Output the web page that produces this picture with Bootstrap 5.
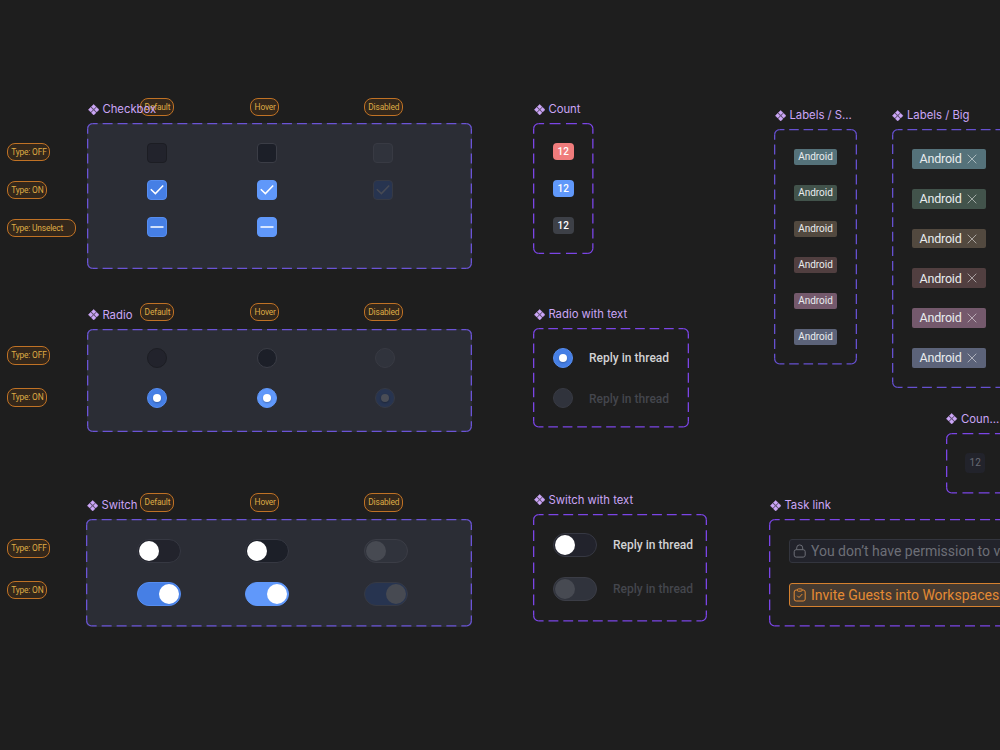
<!DOCTYPE html>
<html lang="en">
<head>
<meta charset="utf-8">
<meta name="viewport" content="width=device-width, initial-scale=1">
<title>Controls</title>
<link href="https://cdn.jsdelivr.net/npm/bootstrap@5.3.0/dist/css/bootstrap.min.css" rel="stylesheet">
<style>
  body { background: #1e1e1e; font-family: Roboto, "Liberation Sans", sans-serif; }
  .board { width: 1000px; height: 750px; }

  /* component sets pinned on the canvas */
  .set { position: absolute; display: flex; flex-direction: column; z-index: 2; }
  .set-name { font: 400 11.3px/15px Inter, sans-serif; letter-spacing: .01px; color: #cba6f7; height: 22px; gap: 3.4px; padding: 1px 0 0 .6px; margin: 0; white-space: nowrap; }
  .set-name svg { width: 11.4px; height: 11.4px; margin-top: 1.6px; flex: none; }
  .frame { position: relative; color: #7b45e6; }
  .frame > .dashes { position: absolute; inset: 0; width: 100%; height: 100%; overflow: visible; pointer-events: none; }
  .stack { display: flex; flex-direction: column; gap: 20px; }
  .filled { background: #2b2d35; border-radius: 5px; color: #6b54d6; }
  .indigo { color: #6650d0; }

  #checkbox { left: 87px; top: 101px; } #checkbox .frame { width: 385px; height: 146px; padding: 20px 0 0 60px; }
  #radio { left: 87px; top: 306.5px; } #radio .frame { width: 385px; height: 103px; padding: 19px 0 0 60px; }
  #switch { left: 86px; top: 497px; } #switch .frame { width: 386px; height: 107.5px; padding: 20px 0 0 51px; }
  #count { left: 533px; top: 101px; } #count .frame { width: 60.5px; height: 131px; padding: 20px; }
  #radio-text { left: 533px; top: 306px; } #radio-text .frame { width: 156px; height: 99.5px; padding: 19.5px 20px; }
  #switch-text { left: 533px; top: 491.5px; } #switch-text .frame { width: 174px; height: 107.5px; padding: 19.5px 20px; }
  #labels-s { left: 774px; top: 107px; } #labels-s .frame { width: 83px; height: 235.5px; padding: 20px; }
  #labels-b { left: 891.6px; top: 107px; } #labels-b .frame { width: 114px; height: 259px; padding: 20px; }
  #count-b { left: 945.6px; top: 410.5px; } #count-b .frame { width: 60px; height: 60.5px; padding: 20px 19.4px; }
  #task { left: 769px; top: 497px; } #task .frame { width: 372px; height: 107.5px; padding: 20px; }

  .states { display: grid; justify-content: start; align-content: start; }
  .s-check { grid-template-columns: 110px 115.6px 20px; row-gap: 17px; }
  .s-radio { grid-template-columns: 110px 117.6px 20px; row-gap: 20px; }
  .s-switch { grid-template-columns: 108px 118.7px 44px; row-gap: 19px; }

  .box, .dot { width: 20px; height: 20px; border: 1px solid #1c1d23; background: #22232c; display: flex; align-items: center; justify-content: center; flex: none; }
  .box { border-radius: 4px; }
  .box svg { width: 18px; height: 18px; fill: none; stroke: #fff; stroke-width: 1.5; flex: none; }
  .dot { border-radius: 50%; }
  .dot i { width: 8px; height: 8px; border-radius: 50%; background: #fff; box-shadow: 0 1px 2px #0004; }
  .hov { background: #1c1f28; border-color: #3b3d46; }
  .off { background: #30333c; border-color: #383a43; }
  .on { background: #467fe5; border-color: #568df0; }
  .on.hov { background: #6098fa; border-color: #6098fa; }
  .on.off { background: #273450; border-color: #363943; }
  .on.off svg { stroke: #474a54; }
  .on.off i { background: #4a4d56; }

  .sw { width: 44px; height: 24px; padding: 1px; border-radius: 12px; border: 1px solid #363842; background: #22232c; display: flex; align-items: center; flex: none; }
  .sw i { width: 20px; height: 20px; border-radius: 50%; background: #fff; }
  .sw.hov { background: #1c1f28; border-color: #363842; }
  .sw.off { background: #30333c; border-color: #3b3d46; }
  .sw.off i { background: #474a52; }
  .sw.on { background: #467fe5; border-color: #568df0; justify-content: flex-end; }
  .sw.on.hov { background: #6098fa; border-color: #6098fa; }
  .sw.on.off { background: #273450; border-color: #363943; }

  .num { width: 20.5px; height: 17px; border-radius: 4px; font-size: 10px; font-weight: 500; line-height: 17px; letter-spacing: .1px; color: #fff; text-align: center; }
  .n-red { background: #f07c7c; } .n-blue { background: #6098fa; } .n-grey { background: #3d4047; }
  .n-dim { background: #22232b; color: #686a73; height: 20.5px; line-height: 20.5px; font-weight: 400; }

  .reply { font-size: 12px; font-weight: 500; line-height: 20px; letter-spacing: .02px; color: #d2d2d4; white-space: nowrap; padding-top: .6px; }
  .reply.dim { color: #44464d; }

  .tag { border-radius: 2px; color: #e9ecee; white-space: nowrap; display: flex; align-items: center; }
  .tag-s { width: 43px; height: 16px; font-size: 10px; justify-content: center; letter-spacing: -.01px; }
  .tag-b { width: 74px; height: 20px; font-size: 12.5px; padding: 1px 0 0 8px; gap: 5.5px; letter-spacing: -.22px; }
  .tag-b svg { width: 10px; height: 10px; margin-top: -1px; stroke: #fff; opacity: .5; stroke-width: 1; flex: none; }
  .t1 { background: #55727a; } .t2 { background: #42534b; } .t3 { background: #52493f; }
  .t4 { background: #513f40; } .t5 { background: #74596c; } .t6 { background: #5c6379; }

  .task-link { width: 332px; height: 24px; border: 1px solid #33353e; border-radius: 3px; background: #22232b; color: #6d6f77; font-size: 14px; line-height: 22px; padding-left: 3.4px; gap: 3.6px; white-space: nowrap; overflow: hidden; }
  .task-link.live { background: #453a30; border-color: #d5812f; color: #e48a34; }
  .task-link span { padding-top: 1px; }
  .task-link svg { width: 14px; height: 14px; fill: none; stroke: currentColor; flex: none; }

  /* free annotations round the sets */
  .note { position: absolute; height: 18.4px; border: 1.3px solid #c07225; border-radius: 8px; background: #33271b; color: #dfab45; font-size: 8.4px; letter-spacing: -.17px; line-height: 17px; padding-left: 3.6px; white-space: nowrap; z-index: 1; }
  .c1 { left: 140px; width: 34.4px; } .c2 { left: 250px; width: 29px; } .c3 { left: 363.7px; width: 39.3px; }
  .w-off { left: 6.6px; width: 43.8px; } .w-on { left: 6.6px; width: 40.6px; } .w-un { left: 6.6px; width: 69.8px; }
  .y98 { top: 98px; } .y303 { top: 302.7px; } .y493 { top: 493.2px; }
  .y143 { top: 142.9px; } .y181 { top: 180.8px; } .y219 { top: 218.8px; }
  .y346 { top: 346.4px; } .y388 { top: 388.2px; } .y539 { top: 539.2px; } .y581 { top: 581px; }
</style>
</head>
<body class="overflow-hidden">
<svg class="d-none">
  <symbol id="diamonds" viewBox="0 0 12 12"><path fill="currentColor" stroke="currentColor" stroke-width=".5" stroke-linejoin="round" d="M6 .4 8.5 2.9 6 5.3 3.5 2.9ZM6 6.7 8.5 9.1 6 11.6 3.5 9.1ZM2.9 3.5 5.3 6 2.9 8.5 .4 6ZM9.1 3.5 11.6 6 9.1 8.5 6.7 6Z"/></symbol>
  <symbol id="tick" viewBox="0 0 18 18"><path d="M2.8 8.2 7.4 12.6 15.2 4.6"/></symbol>
  <symbol id="minus" viewBox="0 0 18 18"><path d="M2.5 9H15.5"/></symbol>
  <symbol id="cross" viewBox="0 0 10 10"><path d="M.7.7 9.3 9.3M9.3.7.7 9.3"/></symbol>
</svg>
<main class="board position-relative overflow-hidden">

  <span class="note c1 y98">Default</span><span class="note c2 y98">Hover</span><span class="note c3 y98">Disabled</span>
  <span class="note w-off y143">Type: OFF</span><span class="note w-on y181">Type: ON</span><span class="note w-un y219">Type: Unselect</span>
  <span class="note c1 y303">Default</span><span class="note c2 y303">Hover</span><span class="note c3 y303">Disabled</span>
  <span class="note w-off y346">Type: OFF</span><span class="note w-on y388">Type: ON</span>
  <span class="note c1 y493">Default</span><span class="note c2 y493">Hover</span><span class="note c3 y493">Disabled</span>
  <span class="note w-off y539">Type: OFF</span><span class="note w-on y581">Type: ON</span>

  <section class="set" id="checkbox">
    <h2 class="set-name d-flex"><svg><use href="#diamonds"/></svg>Checkbox</h2>
    <div class="frame filled states s-check">
      <span class="box"></span><span class="box hov"></span><span class="box off"></span>
      <span class="box on"><svg><use href="#tick"/></svg></span><span class="box on hov"><svg><use href="#tick"/></svg></span><span class="box on off"><svg><use href="#tick"/></svg></span>
      <span class="box on"><svg><use href="#minus"/></svg></span><span class="box on hov"><svg><use href="#minus"/></svg></span>
    </div>
  </section>

  <section class="set" id="radio">
    <h2 class="set-name d-flex"><svg><use href="#diamonds"/></svg>Radio</h2>
    <div class="frame filled states s-radio">
      <span class="dot"></span><span class="dot hov"></span><span class="dot off"></span>
      <span class="dot on"><i></i></span><span class="dot on hov"><i></i></span><span class="dot on off"><i></i></span>
    </div>
  </section>

  <section class="set" id="switch">
    <h2 class="set-name d-flex"><svg><use href="#diamonds"/></svg>Switch</h2>
    <div class="frame filled states s-switch">
      <span class="sw"><i></i></span><span class="sw hov"><i></i></span><span class="sw off"><i></i></span>
      <span class="sw on"><i></i></span><span class="sw on hov"><i></i></span><span class="sw on off"><i></i></span>
    </div>
  </section>

  <section class="set" id="count">
    <h2 class="set-name d-flex"><svg><use href="#diamonds"/></svg>Count</h2>
    <div class="frame stack">
      <span class="num n-red">12</span><span class="num n-blue">12</span><span class="num n-grey">12</span>
    </div>
  </section>

  <section class="set" id="radio-text">
    <h2 class="set-name d-flex"><svg><use href="#diamonds"/></svg>Radio with text</h2>
    <div class="frame stack">
      <div class="d-flex align-items-center gap-3"><span class="dot on"><i></i></span><span class="reply">Reply in thread</span></div>
      <div class="d-flex align-items-center gap-3"><span class="dot off"></span><span class="reply dim">Reply in thread</span></div>
    </div>
  </section>

  <section class="set" id="switch-text">
    <h2 class="set-name d-flex"><svg><use href="#diamonds"/></svg>Switch with text</h2>
    <div class="frame stack">
      <div class="d-flex align-items-center gap-3"><span class="sw"><i></i></span><span class="reply">Reply in thread</span></div>
      <div class="d-flex align-items-center gap-3"><span class="sw off"><i></i></span><span class="reply dim">Reply in thread</span></div>
    </div>
  </section>

  <section class="set" id="labels-s">
    <h2 class="set-name d-flex"><svg><use href="#diamonds"/></svg>Labels / S...</h2>
    <div class="frame indigo stack">
      <span class="tag tag-s t1">Android</span><span class="tag tag-s t2">Android</span><span class="tag tag-s t3">Android</span>
      <span class="tag tag-s t4">Android</span><span class="tag tag-s t5">Android</span><span class="tag tag-s t6">Android</span>
    </div>
  </section>

  <section class="set" id="labels-b">
    <h2 class="set-name d-flex"><svg><use href="#diamonds"/></svg>Labels / Big</h2>
    <div class="frame indigo stack">
      <span class="tag tag-b t1">Android<svg><use href="#cross"/></svg></span>
      <span class="tag tag-b t2">Android<svg><use href="#cross"/></svg></span>
      <span class="tag tag-b t3">Android<svg><use href="#cross"/></svg></span>
      <span class="tag tag-b t4">Android<svg><use href="#cross"/></svg></span>
      <span class="tag tag-b t5">Android<svg><use href="#cross"/></svg></span>
      <span class="tag tag-b t6">Android<svg><use href="#cross"/></svg></span>
    </div>
  </section>

  <section class="set" id="count-b">
    <h2 class="set-name d-flex"><svg><use href="#diamonds"/></svg>Coun...</h2>
    <div class="frame d-flex"><span class="num n-dim">12</span></div>
  </section>

  <section class="set" id="task">
    <h2 class="set-name d-flex"><svg><use href="#diamonds"/></svg>Task link</h2>
    <div class="frame stack">
      <div class="task-link d-flex align-items-center"><svg viewBox="0 0 14 14"><rect x="1.2" y="5.7" width="11" height="7.4" rx="2"/><path d="M3.7 5.7V3.9a3 3 0 0 1 6 0V5.7"/></svg><span>You don’t have permission to view this task</span></div>
      <div class="task-link live d-flex align-items-center"><svg viewBox="0 0 14 14"><path d="M4.3 2H3.2a2 2 0 0 0-2 2V11a2 2 0 0 0 2 2H10.2a2 2 0 0 0 2-2V4a2 2 0 0 0-2-2H9.1"/><rect x="4.3" y=".9" width="4.8" height="2.3" rx="1"/><path d="M4.2 7.7 6 9.5 9.3 6"/></svg><span>Invite Guests into Workspaces</span></div>
    </div>
  </section>
</main>

<script src="https://cdn.jsdelivr.net/npm/bootstrap@5.3.0/dist/js/bootstrap.bundle.min.js"></script>
<script>
  // Dashed outline: every side holds whole periods, with half a dash at each rounded corner.
  const NS = 'http://www.w3.org/2000/svg', R = 5, IN = 0.65;
  document.querySelectorAll('.frame').forEach(f => {
    const b = f.getBoundingClientRect();
    const x0 = IN, y0 = IN, x1 = b.width - IN, y1 = b.height - IN;
    const svg = document.createElementNS(NS, 'svg');
    svg.setAttribute('class', 'dashes');
    const add = (d, dash, off) => {
      const p = document.createElementNS(NS, 'path');
      p.setAttribute('d', d);
      p.setAttribute('fill', 'none');
      p.setAttribute('stroke', 'currentColor');
      p.setAttribute('stroke-width', 1.3);
      if (dash) { p.setAttribute('stroke-dasharray', dash); p.setAttribute('stroke-dashoffset', off); }
      svg.appendChild(p);
    };
    const side = (ax, ay, bx, by) => {
      const len = Math.hypot(bx - ax, by - ay), per = len / Math.round(len / 15), on = per * 2 / 3;
      add(`M${ax} ${ay}L${bx} ${by}`, `${on} ${per - on}`, on / 2);
    };
    side(x0 + R, y0, x1 - R, y0); side(x0 + R, y1, x1 - R, y1);
    side(x0, y0 + R, x0, y1 - R); side(x1, y0 + R, x1, y1 - R);
    add(`M${x0} ${y0 + R}A${R} ${R} 0 0 1 ${x0 + R} ${y0}M${x1 - R} ${y0}A${R} ${R} 0 0 1 ${x1} ${y0 + R}` +
        `M${x1} ${y1 - R}A${R} ${R} 0 0 1 ${x1 - R} ${y1}M${x0 + R} ${y1}A${R} ${R} 0 0 1 ${x0} ${y1 - R}`);
    f.appendChild(svg);
  });
</script>
</body>
</html>
